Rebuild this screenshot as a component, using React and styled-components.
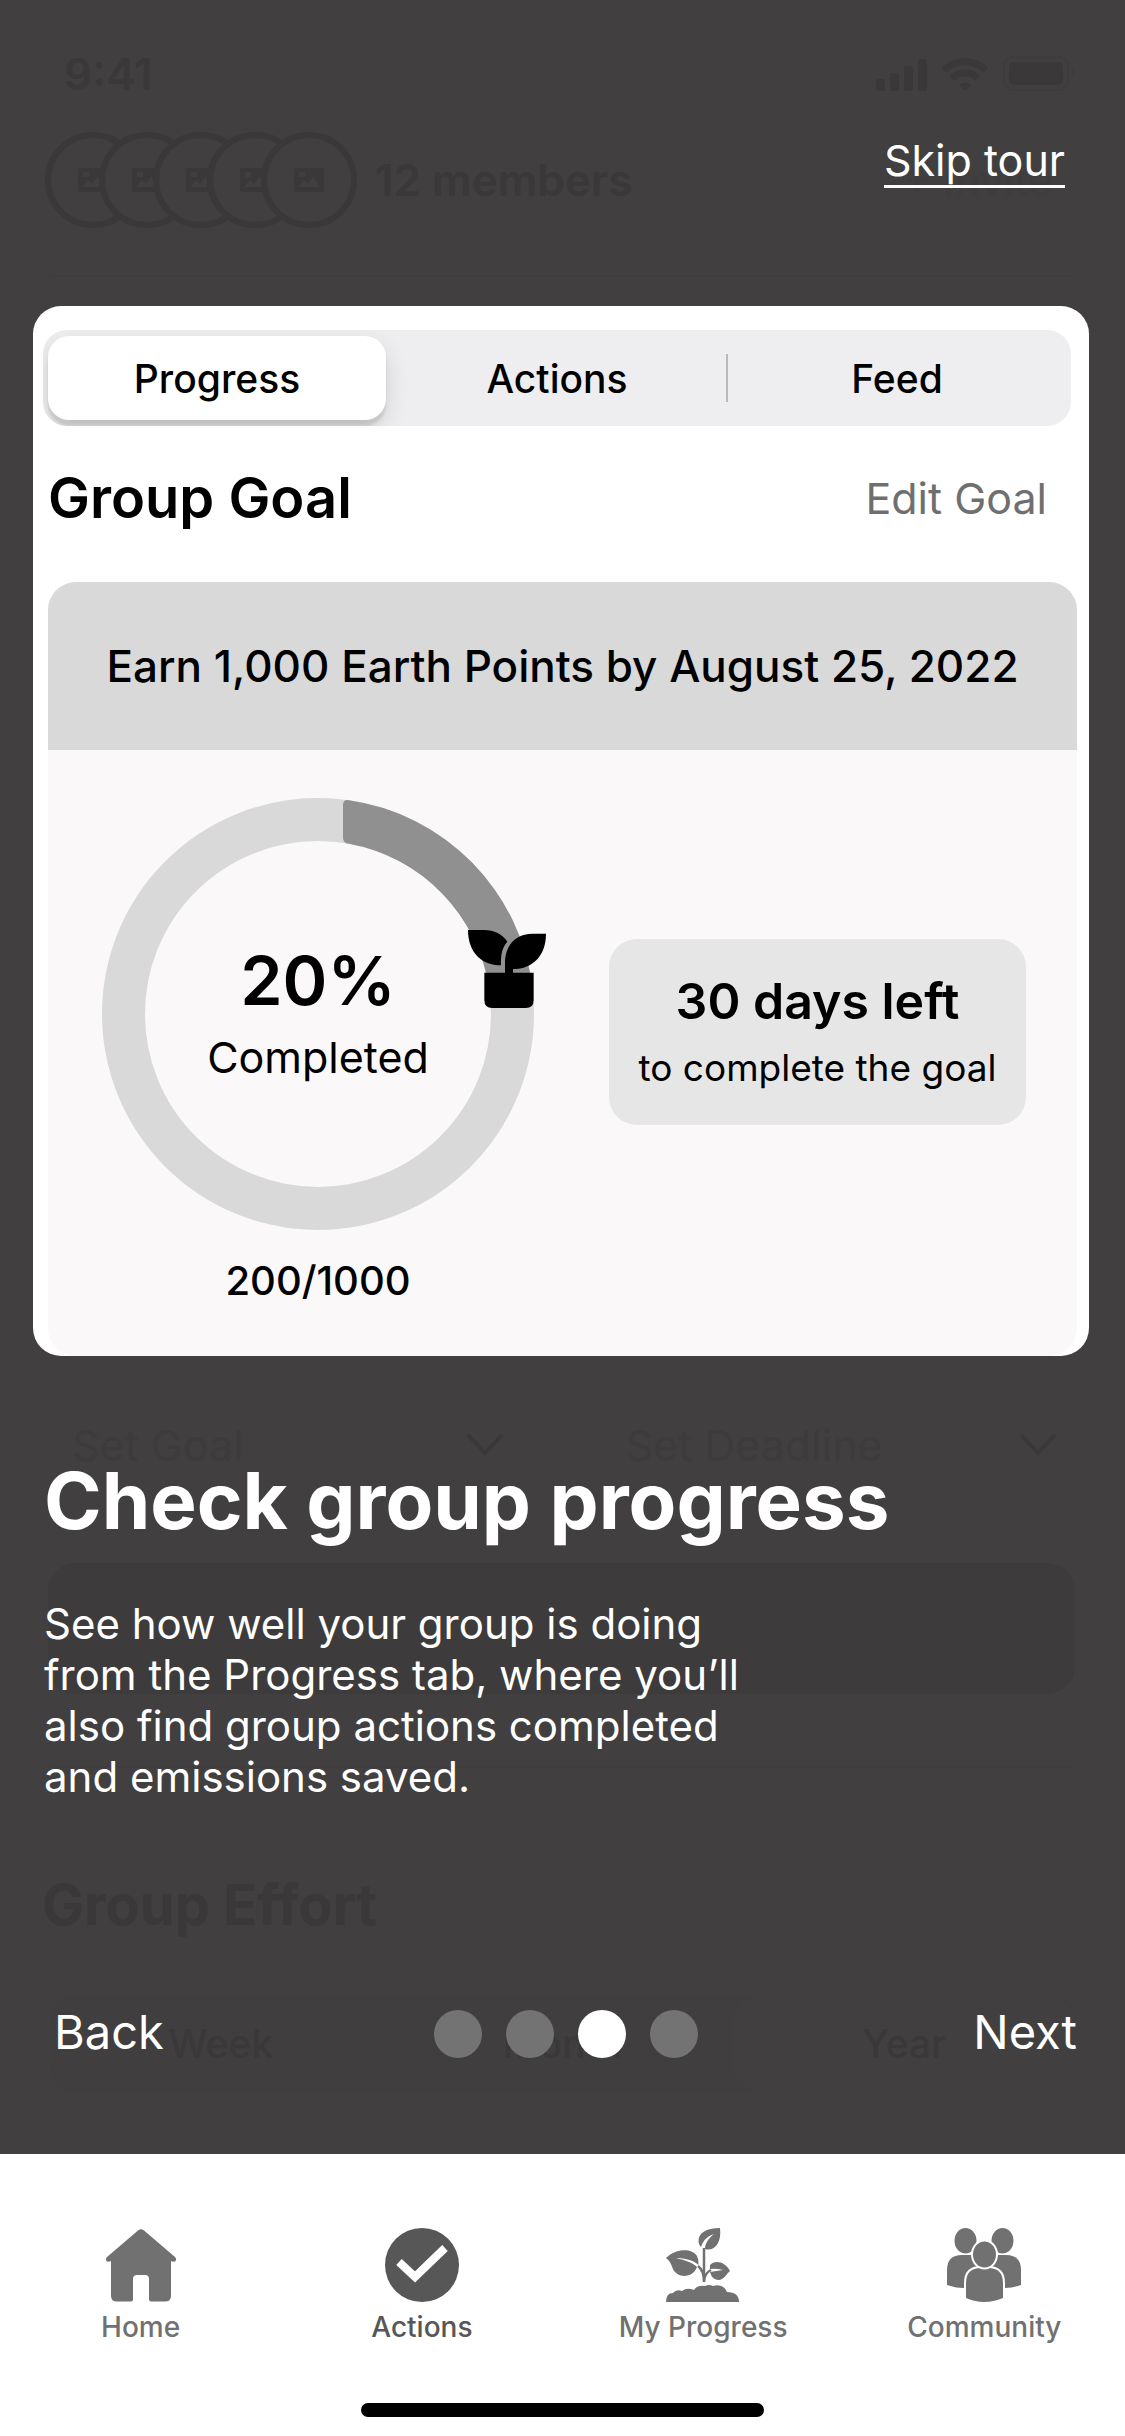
import React, { useState } from "react";
import styled, { createGlobalStyle } from "styled-components";

const color = {
  scrim: "#413f40",
  ghost: "#3a3839",
  ghostSoft: "#3d3b3c",
  ghostLine: "#3f3d3e",
  white: "#ffffff",
  ink: "#000000",
  muted: "#6f6f6f",
};

const GlobalStyle = createGlobalStyle`
  *, *::before, *::after { box-sizing: border-box; }
  body { margin: 0; background: ${color.scrim}; }
  body, button, select { font-family: Inter, "Liberation Sans", sans-serif; }
  h1, h2, p, ol, ul { margin: 0; padding: 0; }
  ol, ul { list-style: none; }
  svg { display: block; }
`;

const Page = styled.div`
  min-height: 100vh;
  display: flex;
  flex-direction: column;
  background: ${color.scrim};
`;

const Stage = styled.main`
  flex: 1;
  display: grid;
  grid-template-columns: minmax(0, 1fr);
`;

const PlainButton = styled.button`
  margin: 0;
  padding: 0;
  border: 0;
  background: none;
  color: inherit;
  cursor: pointer;
`;

/* Dimmed group screen underneath the tour */

const GroupScreen = styled.div`
  grid-area: 1 / 1;
  padding-top: 44px;
  color: ${color.ghost};
`;

const StatusBar = styled.div`
  display: flex;
  align-items: center;
  justify-content: space-between;
  height: 60px;
  padding: 0 49px 0 64px;
  font-size: 44px;
  font-weight: 600;
`;

const MembersRow = styled.div`
  display: flex;
  align-items: center;
  height: 96px;
  margin-top: 28px;
  padding: 0 72px 0 45px;
`;

const Avatars = styled.ul`
  display: flex;
`;

const Avatar = styled.li`
  display: grid;
  place-items: center;
  width: 96px;
  height: 96px;
  border: 6px solid ${color.ghost};
  border-radius: 50%;
  background: ${color.scrim};

  & + & {
    margin-left: -42px;
  }
`;

const MemberCount = styled.p`
  flex: 1;
  margin-left: 18px;
  font-size: 44px;
  font-weight: 600;
`;

const InviteButton = styled(PlainButton)`
  color: ${color.ghostLine};
  font-size: 43px;
`;

const Divider = styled.hr`
  height: 2px;
  margin: ${(p) => p.$top}px 50px 0;
  border: 0;
  background: ${color.ghostLine};
`;

const GoalPickers = styled.div`
  display: grid;
  grid-template-columns: 1fr 1fr;
  gap: 122px;
  margin-top: 1138px;
  padding: 0 68px 0 72px;
`;

const Picker = styled.div`
  display: flex;
  align-items: center;
  height: 60px;
`;

const PickerSelect = styled.select`
  flex: 1;
  min-width: 0;
  padding: 0;
  border: 0;
  appearance: none;
  background: none;
  color: ${color.ghostSoft};
  font-size: 43px;
`;

const SaveBar = styled.div`
  height: 131px;
  margin: 88px 50px 0 48px;
  border-radius: 28px;
  background: ${color.ghostSoft};
`;

const EffortTitle = styled.h2`
  margin: 102px 0 0 42px;
  font-size: 56px;
  font-weight: 700;
  line-height: 70px;
`;

const PeriodTabs = styled.div`
  display: grid;
  grid-template-columns: repeat(3, 1fr);
  height: 93px;
  margin: 57px 50px 0;
  border-radius: 24px;
  background: #403e3f;
`;

const PeriodTab = styled(PlainButton)`
  border-radius: 24px;
  background: ${(p) => (p.$active ? color.scrim : "none")};
  font-size: 39px;
  font-weight: 500;
`;

/* Tour */

const Tour = styled.section`
  grid-area: 1 / 1;
  z-index: 1;
  display: flex;
  flex-direction: column;
  padding: 135px 0 90px;
`;

const SkipButton = styled(PlainButton)`
  align-self: flex-end;
  margin-right: 60px;
  border-bottom: 3px solid ${color.white};
  color: ${color.white};
  font-size: 43px;
  line-height: 50px;
`;

const Spotlight = styled.div`
  margin: 118px 36px 0 33px;
  padding-top: 24px;
  border-radius: 28px;
  background: ${color.white};
`;

const Tabs = styled.div`
  display: flex;
  align-items: center;
  height: 96px;
  margin: 0 18px 0 10px;
  padding: 0 5px;
  border-radius: 24px;
  background: #eeeef0;
  overflow: hidden;
`;

const Tab = styled(PlainButton)`
  flex: 1;
  height: 84px;
  border-radius: 21px;
  background: ${(p) => (p.$active ? color.white : "none")};
  box-shadow: ${(p) =>
    p.$active ? "0 9px 24px rgba(0, 0, 0, 0.12), 0 6px 3px rgba(0, 0, 0, 0.1)" : "none"};
  font-size: 39px;
  font-weight: 500;
`;

const TabRule = styled.span`
  width: 2px;
  height: 48px;
  background: ${(p) => (p.$shown ? "#b9b9bb" : "transparent")};
`;

const GoalHeading = styled.div`
  display: flex;
  align-items: center;
  justify-content: space-between;
  height: 72px;
  margin-top: 36px;
  padding: 0 42px 0 15px;
`;

const GoalTitle = styled.h2`
  font-size: 56px;
  font-weight: 600;
`;

const EditButton = styled(PlainButton)`
  color: ${color.muted};
  font-size: 43px;
`;

const GoalCard = styled.div`
  margin: 48px 12px 0 15px;
  border-radius: 28px;
  background: #faf8f9;
  overflow: hidden;
`;

const GoalBanner = styled.p`
  padding: 54px 24px;
  background: #d9d9d9;
  font-size: 44px;
  font-weight: 500;
  line-height: 60px;
  text-align: center;
`;

const GoalBody = styled.div`
  display: flex;
  align-items: flex-start;
  gap: 75px;
  padding: 48px 51px 50px 54px;
`;

const RingColumn = styled.div`
  display: flex;
  flex-direction: column;
  align-items: center;
  gap: 26px;
`;

const Ring = styled.div`
  display: grid;
  justify-items: center;
  align-items: start;

  & > * {
    grid-area: 1 / 1;
  }
`;

const RingText = styled.div`
  padding-top: 140px;
  text-align: center;
`;

const Percent = styled.p`
  font-size: 68px;
  font-weight: 600;
  line-height: 84px;
`;

const PercentLabel = styled.p`
  margin-top: 5px;
  font-size: 43px;
  line-height: 60px;
`;

const Points = styled.p`
  font-size: 40px;
  font-weight: 500;
  line-height: 50px;
`;

const Deadline = styled.div`
  flex: 1;
  margin-top: 141px;
  padding: 29px 0 32px;
  border-radius: 28px;
  background: #e6e6e6;
  text-align: center;
`;

const DaysLeft = styled.p`
  font-size: 50px;
  font-weight: 600;
  line-height: 66px;
`;

const DaysNote = styled.p`
  margin-top: 9px;
  font-size: 37px;
  line-height: 50px;
`;

const TourTitle = styled.h1`
  margin: 95px 44px 0;
  color: ${color.white};
  font-size: 78px;
  font-weight: 700;
  line-height: 100px;
`;

const TourText = styled.p`
  max-width: 760px;
  margin: 47px 44px 0;
  color: ${color.white};
  font-size: 42px;
  line-height: 51px;
`;

const TourControls = styled.div`
  display: grid;
  grid-template-columns: 1fr auto 1fr;
  align-items: center;
  height: 60px;
  margin-top: auto;
  padding: 0 48px 0 54px;
`;

const StepButton = styled(PlainButton)`
  justify-self: ${(p) => p.$side};
  padding-bottom: 4px;
  color: ${color.white};
  font-size: 47px;
  line-height: 56px;
`;

const Dots = styled.div`
  display: flex;
  gap: 24px;
`;

const Dot = styled(PlainButton)`
  width: 48px;
  height: 48px;
  border-radius: 50%;
  background: ${(p) => (p.$active ? color.white : "#737373")};
`;

/* Bottom navigation */

const BottomBar = styled.footer`
  padding: 74px 0 19px;
  background: ${color.white};
`;

const NavGrid = styled.nav`
  display: grid;
  grid-template-columns: repeat(4, 1fr);
`;

const NavLink = styled.a`
  display: flex;
  flex-direction: column;
  align-items: center;
  gap: 9px;
  color: ${(p) => (p.$active ? "#575757" : "#717171")};
  font-size: 28px;
  font-weight: 500;
  line-height: 32px;
  text-decoration: none;
`;

const HomeIndicator = styled.div`
  width: 403px;
  height: 14px;
  margin: 60px auto 0;
  border-radius: 7px;
  background: ${color.ink};
`;

const StatusIcons = () => (
  <svg width="200" height="36" viewBox="0 0 200 36" fill="currentColor">
    <rect x="0" y="23" width="9" height="12" rx="3" />
    <rect x="14" y="17" width="9" height="18" rx="3" />
    <rect x="28" y="10" width="9" height="25" rx="3" />
    <rect x="42" y="3" width="9" height="32" rx="3" />
    <g fill="none" stroke="currentColor" strokeWidth="7">
      <path d="M68 14 C80 3 98 3 110 14" />
      <path d="M76 22 C84 15 94 15 102 22" />
    </g>
    <path d="M83 29 Q89 24 95 29 L89 35 Z" />
    <rect x="128" y="1" width="64" height="33" rx="9" fill="none" stroke="#3e3c3d" strokeWidth="2" />
    <rect x="133" y="6" width="54" height="23" rx="5" />
    <path d="M196 12 Q201 17 196 22 Z" fill="#3e3c3d" />
  </svg>
);

const ImageIcon = () => (
  <svg width="30" height="24" viewBox="0 0 30 24">
    <rect width="30" height="24" rx="2" fill={color.ghost} />
    <path d="M4 19 L10 12 L14 16 L19 8 L26 19 Z M5 4 h6 v5 h-6 z" fill={color.scrim} />
  </svg>
);

const Chevron = () => (
  <svg width="38" height="24" viewBox="0 0 38 24" fill="none" stroke={color.ghost} strokeWidth="4">
    <path d="M2 2 L19 20 L36 2" />
  </svg>
);

const ProgressRing = () => (
  <svg width="432" height="432" viewBox="0 0 432 432" overflow="visible">
    <circle cx="216" cy="216" r="194.5" fill="none" stroke="#d9d9d9" strokeWidth="43" />
    <path
      d="M247 2.200 A216 216 0 0 1 430.500 190 L387 190 A173 173 0 0 0 247 45.800 Q241 45 241 40 L241 7 Q241 1.500 247 2.200 Z"
      fill="#909090"
    />
    <svg x="366" y="132" width="78" height="78" viewBox="84 90 234 234">
      <path d="M84 90 H132 C162 90 188 103 202 125 C188 142 182 158 183 196 C126 196 84 158 84 90 Z" />
      <path d="M318 101 C318 165 280 207 219 207 V220 H195 V182 C198 130 232 101 278 101 Z" />
      <path d="M133 218 H281 V300 Q281 324 257 324 H157 Q133 324 133 300 Z" />
    </svg>
  </svg>
);

const HomeIcon = () => (
  <svg width="74" height="74" viewBox="0 0 74 74" fill="currentColor">
    <path d="M34 2.500 Q37 0 40 2.500 L71 29 Q73 31 71.500 33 Q70 34.500 67 33 V68 Q67 73.500 61 73.500 H47 Q45 73.500 45 71.500 V51 Q45 47 41 47 H33 Q29 47 29 51 V71.500 Q29 73.500 27 73.500 H13 Q7 73.500 7 68 V33 Q4 34.500 2.500 33 Q1 31 3 29 Z" />
  </svg>
);

const CheckIcon = () => (
  <svg width="74" height="74" viewBox="0 0 74 74">
    <circle cx="37" cy="37" r="37" fill="currentColor" />
    <path d="M14 34 L30 49 L60 20" fill="none" stroke="#fff" strokeWidth="8" />
  </svg>
);

const SproutIcon = () => (
  <svg width="74" height="74" viewBox="0 0 74 74" fill="currentColor">
    <path d="M54 0 C40 0 32 5 32.500 14 Q33 17 35 19 C37 13 41 8 48 6 C43 10 39 15 39 21 C48 24 56 15 54 0 Z" />
    <path d="M0 30 C10 20 26 20 31 28 Q33 32 32.500 37 C27 32 19 30 10 30 C18 32 26 34 31 39 C27 50 12 51 7 41 C5 36 4 33 0 30 Z" />
    <path d="M64 43 C60 34 49 31 44 37 V41 Q50 40 57 42 Q50 43 44 44 Q46 52 53 52 C59 51 60 46 64 43 Z" />
    <path
      d="M38 20 V54 M32 38 C36 41 38 47 38 54 C38 47 41 44 45 42"
      fill="none"
      stroke="currentColor"
      strokeWidth="2.5"
    />
    <path d="M0 74 Q0 65 7 65 Q10 61 16 63 Q21 59 28 62 Q31 57 39 58 Q43 56 47 58 Q57 55 61 64 Q73 64 73 74 Z" />
  </svg>
);

const PeopleIcon = () => (
  <svg width="74" height="74" viewBox="0 0 74 74" fill="currentColor">
    <ellipse cx="18.500" cy="12.700" rx="11" ry="12.700" />
    <ellipse cx="55.500" cy="12.700" rx="11" ry="12.700" />
    <path d="M0 57 V42 Q0 27 15 27 H59 Q74 27 74 42 V57 Q66 60 58 60 H16 Q8 60 0 57 Z" />
    <g stroke="#fff" strokeWidth="4" paintOrder="stroke">
      <path d="M19 70 V55 Q19 40 34 40 H41 Q56 40 56 55 V70 Q37 78 19 70 Z" />
      <ellipse cx="37.500" cy="26.500" rx="11.500" ry="13" />
    </g>
  </svg>
);

const TABS = ["Progress", "Actions", "Feed"];
const NAV = [
  { label: "Home", Icon: HomeIcon },
  { label: "Actions", Icon: CheckIcon, active: true },
  { label: "My Progress", Icon: SproutIcon },
  { label: "Community", Icon: PeopleIcon },
];

function GroupBackdrop() {
  return (
    <GroupScreen inert aria-hidden="true">
      <StatusBar>
        <span>9:41</span>
        <StatusIcons />
      </StatusBar>
      <MembersRow>
        <Avatars>
          {[1, 2, 3, 4, 5].map((n) => (
            <Avatar key={n}>
              <ImageIcon />
            </Avatar>
          ))}
        </Avatars>
        <MemberCount>12 members</MemberCount>
        <InviteButton type="button">+ Invite</InviteButton>
      </MembersRow>
      <Divider $top={47} />
      <GoalPickers>
        {["Set Goal", "Set Deadline"].map((label) => (
          <Picker key={label}>
            <PickerSelect aria-label={label}>
              <option>{label}</option>
            </PickerSelect>
            <Chevron />
          </Picker>
        ))}
      </GoalPickers>
      <SaveBar />
      <Divider $top={72} />
      <EffortTitle>Group Effort</EffortTitle>
      <PeriodTabs>
        {["Week", "Month", "Year"].map((label) => (
          <PeriodTab key={label} type="button" $active={label === "Year"}>
            {label}
          </PeriodTab>
        ))}
      </PeriodTabs>
    </GroupScreen>
  );
}

export default function App() {
  const [tab, setTab] = useState(0);
  const [step, setStep] = useState(2);

  return (
    <Page>
      <GlobalStyle />
      <Stage>
        <GroupBackdrop />
        <Tour aria-label="Tour">
          <SkipButton type="button">Skip tour</SkipButton>
          <Spotlight>
            <Tabs role="tablist">
              {TABS.map((label, i) => (
                <React.Fragment key={label}>
                  {i > 0 && <TabRule $shown={tab !== i && tab !== i - 1} />}
                  <Tab
                    type="button"
                    role="tab"
                    aria-selected={tab === i}
                    $active={tab === i}
                    onClick={() => setTab(i)}
                  >
                    {label}
                  </Tab>
                </React.Fragment>
              ))}
            </Tabs>
            <GoalHeading>
              <GoalTitle>Group Goal</GoalTitle>
              <EditButton type="button">Edit Goal</EditButton>
            </GoalHeading>
            <GoalCard>
              <GoalBanner>Earn 1,000 Earth Points by August 25, 2022</GoalBanner>
              <GoalBody>
                <RingColumn>
                  <Ring>
                    <ProgressRing />
                    <RingText>
                      <Percent>20%</Percent>
                      <PercentLabel>Completed</PercentLabel>
                    </RingText>
                  </Ring>
                  <Points>200/1000</Points>
                </RingColumn>
                <Deadline>
                  <DaysLeft>30 days left</DaysLeft>
                  <DaysNote>to complete the goal</DaysNote>
                </Deadline>
              </GoalBody>
            </GoalCard>
          </Spotlight>
          <TourTitle>Check group progress</TourTitle>
          <TourText>
            See how well your group is doing from the Progress tab, where you’ll also find group
            actions completed and emissions saved.
          </TourText>
          <TourControls>
            <StepButton type="button" $side="start" onClick={() => setStep(Math.max(0, step - 1))}>
              Back
            </StepButton>
            <Dots>
              {[0, 1, 2, 3].map((i) => (
                <Dot
                  key={i}
                  type="button"
                  aria-label={`Step ${i + 1}`}
                  $active={i === step}
                  onClick={() => setStep(i)}
                />
              ))}
            </Dots>
            <StepButton type="button" $side="end" onClick={() => setStep(Math.min(3, step + 1))}>
              Next
            </StepButton>
          </TourControls>
        </Tour>
      </Stage>
      <BottomBar>
        <NavGrid>
          {NAV.map(({ label, Icon, active }) => (
            <NavLink key={label} href="#" $active={active}>
              <Icon />
              {label}
            </NavLink>
          ))}
        </NavGrid>
        <HomeIndicator />
      </BottomBar>
    </Page>
  );
}
